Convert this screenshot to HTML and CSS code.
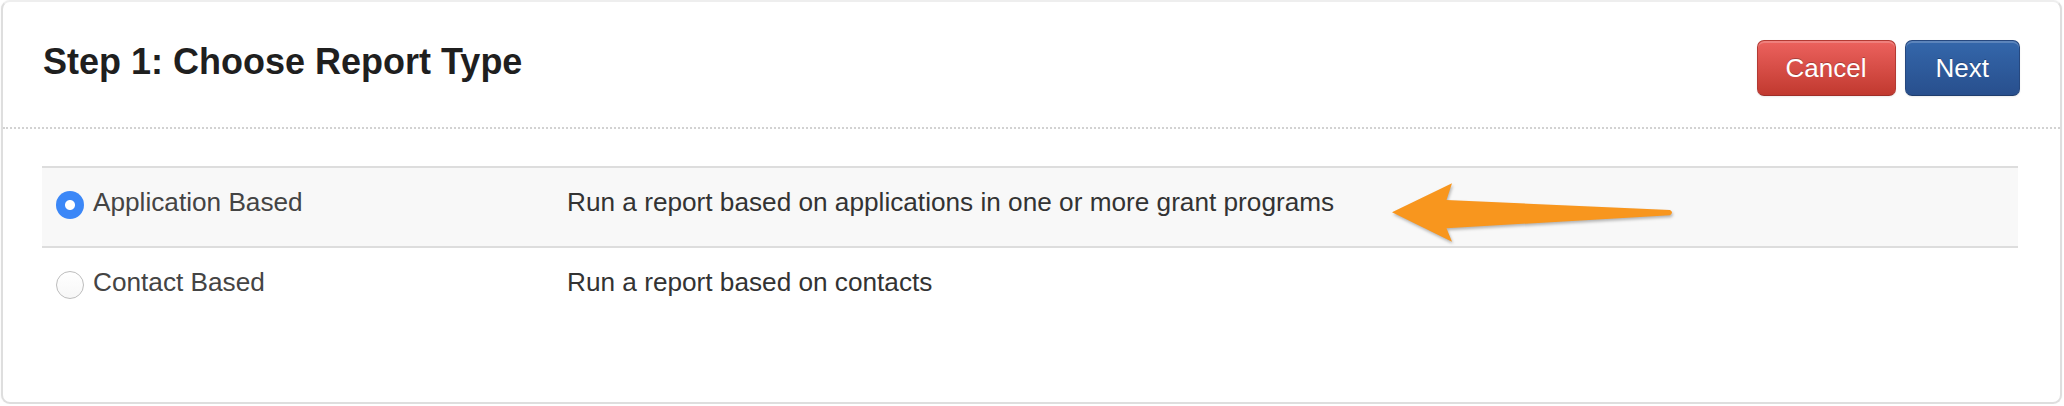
FILE: index.html
```html
<!DOCTYPE html>
<html lang="en">
<head>
<meta charset="utf-8">
<title>Step 1: Choose Report Type</title>
<link rel="stylesheet" href="styles.css">
</head>
<body>
<div class="panel">
  <div class="panel-header">
    <h3 class="title">Step 1: Choose Report Type</h3>
    <div class="actions">
      <button class="btn btn-danger" type="button">Cancel</button>
      <button class="btn btn-primary" type="button">Next</button>
    </div>
  </div>
  <div class="panel-body">
    <div class="table">
      <div class="row row-selected">
        <div class="cell cell-name">
          <span class="radio radio-checked"></span>
          <span class="label">Application Based</span>
        </div>
        <div class="cell cell-desc">Run a report based on applications in one or more grant programs</div>
      </div>
      <div class="row">
        <div class="cell cell-name">
          <span class="radio"></span>
          <span class="label">Contact Based</span>
        </div>
        <div class="cell cell-desc">Run a report based on contacts</div>
      </div>
    </div>
  </div>
  <svg class="arrow" width="300" height="90" viewBox="0 0 300 90" aria-hidden="true">
    <path d="M12,42.3 L72,13.3 L66.5,30 L290,40 Q294,42.5 290,45.2 L66.5,58.3 L72,71.7 Z" fill="#f8961e"/>
  </svg>
</div>
</body>
</html>
```
FILE: styles.css
```css
* { box-sizing: border-box; }

html, body {
  margin: 0;
  padding: 0;
  background: #ffffff;
}

body {
  font-family: "Liberation Sans", Arial, Helvetica, sans-serif;
  color: #333333;
}

.panel {
  position: relative;
  margin: 0 2px 0 1px;
  height: 404px;
  border: 2px solid #dedede;
  border-top-color: #eeeeee;
  border-radius: 9px;
  background: #ffffff;
  box-shadow: 0 0 2px rgba(0, 0, 0, 0.06);
}

.panel-header {
  display: flex;
  align-items: center;
  justify-content: space-between;
  padding: 38px 40px 31px 40px;
  border-bottom: 2px dotted #d2d2d2;
}

.title {
  margin: 0 0 12px 0;
  font-size: 36px;
  line-height: 44px;
  font-weight: bold;
  color: #1f1f1f;
}

.actions {
  display: flex;
  gap: 9px;
}

.btn {
  height: 56px;
  padding: 0 28px;
  font-family: "Liberation Sans", Arial, Helvetica, sans-serif;
  font-size: 26px;
  color: #ffffff;
  border-radius: 7px;
  cursor: pointer;
  text-shadow: 0 -1px 0 rgba(0, 0, 0, 0.25);
  box-shadow: inset 0 2px 0 rgba(255, 255, 255, 0.2), 0 1px 2px rgba(0, 0, 0, 0.08);
}

.btn-danger {
  background: linear-gradient(#ec625e, #c1392f);
  border: 1px solid #b33a33;
  border-bottom-color: #9e2e28;
}

.btn-primary {
  padding: 0 30px;
  background: linear-gradient(#3467ab, #284f8d);
  border: 1px solid #26487f;
  border-bottom-color: #1f3d6d;
}

.panel-body {
  padding: 37px 42px 0 39px;
}

.table {
  border-top: 2px solid #dddddd;
}

.row {
  display: grid;
  grid-template-columns: 511px 1fr;
  height: 78px;
}

.row + .row {
  border-top: 2px solid #dddddd;
  height: 80px;
}

.row-selected {
  background: #f8f8f8;
}

.cell {
  padding: 14px 14px 0 14px;
  font-size: 26.2px;
  line-height: 40px;
}

.cell-name {
  display: flex;
  align-items: flex-start;
  gap: 9px;
  color: #444444;
}

.cell-desc {
  color: #333333;
}

.radio {
  flex: none;
  width: 28px;
  height: 28px;
  margin-top: 9px;
  border-radius: 50%;
  border: 1.5px solid #bdbdbd;
  background: linear-gradient(#ffffff, #f7f7f7);
}

.radio-checked {
  border: none;
  background: radial-gradient(circle, #ffffff 0 4.5px, #3b87f7 5.5px);
}

.arrow {
  position: absolute;
  left: 1377px;
  top: 168px;
  filter: drop-shadow(1px 2px 1.5px rgba(0, 0, 0, 0.28));
}
```
